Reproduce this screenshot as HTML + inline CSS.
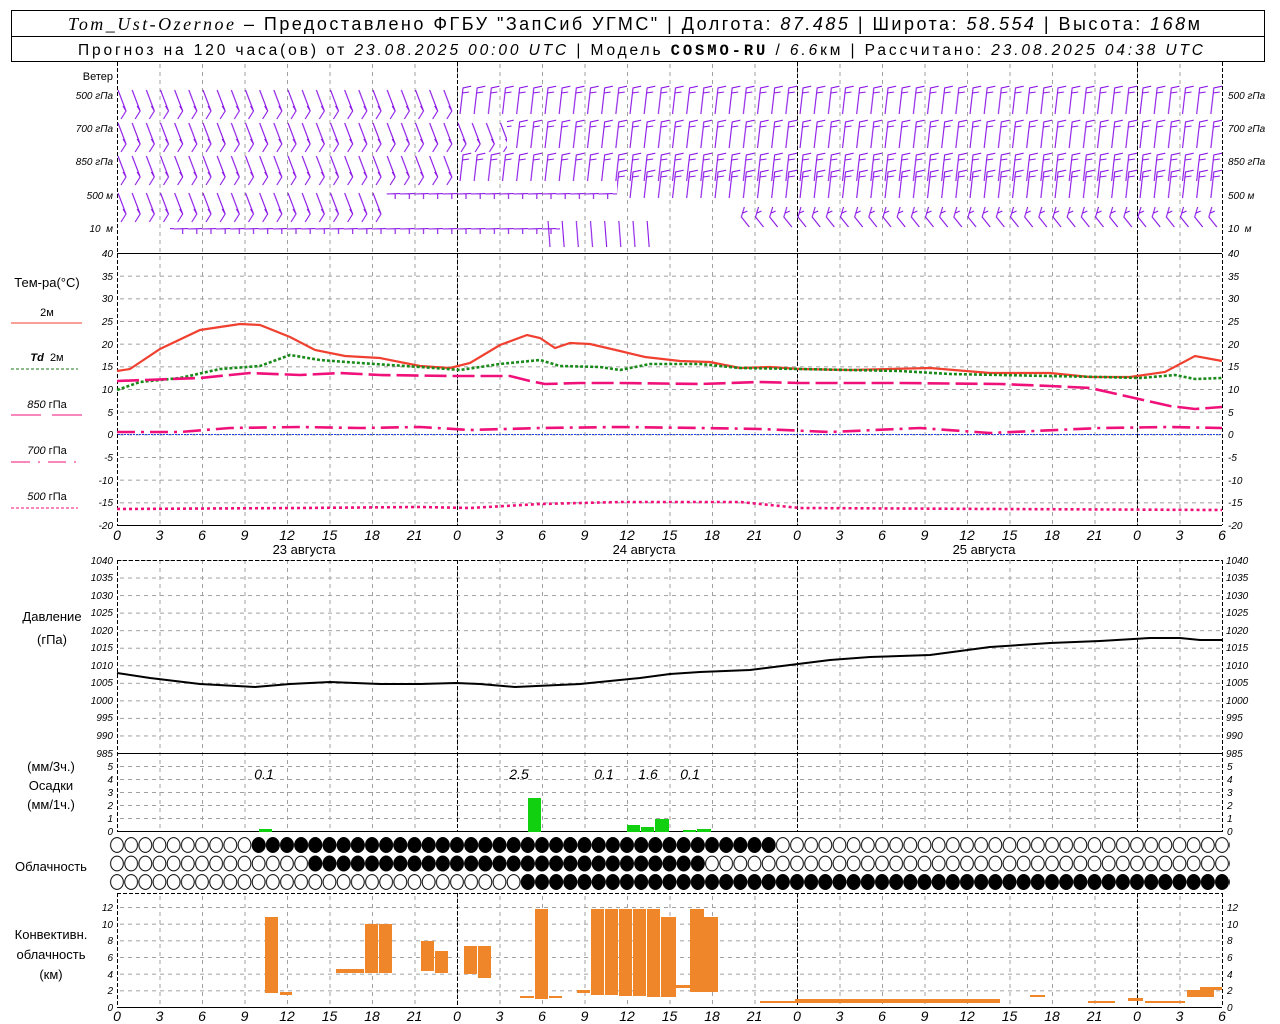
<!DOCTYPE html>
<html><head><meta charset="utf-8"><style>
html,body{margin:0;padding:0;background:#fff;}
svg{display:block;font-family:"Liberation Sans","DejaVu Sans",sans-serif;}
.n{font-style:italic;}
</style></head><body>
<svg width="1280" height="1024" viewBox="0 0 1280 1024" xmlns="http://www.w3.org/2000/svg">
<defs>
<pattern id="vg" x="117" y="0" width="42.5" height="8" patternUnits="userSpaceOnUse"><rect x="0" y="0" width="1" height="4" fill="#a0a0a0"/></pattern>
<pattern id="hT" x="0" y="253" width="8" height="22.667" patternUnits="userSpaceOnUse"><rect x="0" y="0" width="4" height="1" fill="#a0a0a0"/></pattern>
<pattern id="hP" x="0" y="560" width="8" height="17.545" patternUnits="userSpaceOnUse"><rect x="0" y="0" width="4" height="1" fill="#a0a0a0"/></pattern>
<pattern id="hR" x="0" y="766" width="8" height="13" patternUnits="userSpaceOnUse"><rect x="0" y="0" width="4" height="1" fill="#a0a0a0"/></pattern>
<pattern id="hC" x="0" y="907" width="8" height="16.667" patternUnits="userSpaceOnUse"><rect x="0" y="0" width="4" height="1" fill="#a0a0a0"/></pattern>
<pattern id="ce" x="109.9" y="836" width="14.167" height="18.5" patternUnits="userSpaceOnUse"><ellipse cx="7.08" cy="9" rx="6.4" ry="7.4" fill="#fff" stroke="#000" stroke-width="1"/></pattern>
<pattern id="cf" x="109.9" y="836" width="14.167" height="18.5" patternUnits="userSpaceOnUse"><ellipse cx="7.08" cy="9" rx="6.4" ry="7.4" fill="#000" stroke="#000" stroke-width="1"/></pattern>
<pattern id="wA" x="117" y="0" width="14.167" height="60" patternUnits="userSpaceOnUse"><path d="M1 1 L9 22 L4 30 M9 22 L6 17" fill="none" stroke="#8a14e6" stroke-width="1.1"/></pattern>
<pattern id="wB" x="117" y="0" width="14.167" height="60" patternUnits="userSpaceOnUse"><path d="M3 30 L6 4 L15 2 M5.5 9 L12 8" fill="none" stroke="#8a14e6" stroke-width="1.1"/></pattern>
<pattern id="wC" x="117" y="0" width="14.167" height="60" patternUnits="userSpaceOnUse"><path d="M0 8 L15 7.5 M9 8 L9 13" fill="none" stroke="#8a14e6" stroke-width="1.1"/></pattern>
<pattern id="wD" x="117" y="0" width="14.167" height="60" patternUnits="userSpaceOnUse"><path d="M4 2 L1 12 L9 22 M2.5 8 L7 6" fill="none" stroke="#8a14e6" stroke-width="1.1"/></pattern>
<pattern id="wE" x="117" y="0" width="14.167" height="60" patternUnits="userSpaceOnUse"><path d="M6 2 L8 28" fill="none" stroke="#8a14e6" stroke-width="1.1"/></pattern>
</defs>

<!-- header -->
<rect x="11.5" y="10.5" width="1253" height="51" fill="none" stroke="#000"/>
<line x1="11" y1="36.5" x2="1265" y2="36.5" stroke="#000"/>
<text x="68" y="30" font-size="18" textLength="1132" lengthAdjust="spacing"><tspan font-family="Liberation Serif" font-style="italic">Tom_Ust-Ozernoe</tspan> – Предоставлено ФГБУ "ЗапСиб УГМС" | Долгота: <tspan font-style="italic">87.485</tspan> | Широта: <tspan font-style="italic">58.554</tspan> | Высота: <tspan font-style="italic">168</tspan>м</text>
<text x="78" y="55" font-size="15.5" textLength="1125" lengthAdjust="spacing">Прогноз на 120 часа(ов) от <tspan font-style="italic">23.08.2025 00:00 UTC</tspan> | Модель <tspan font-family="Liberation Mono" font-weight="bold">COSMO-RU</tspan> / <tspan font-style="italic">6.6</tspan>км | Рассчитано: <tspan font-style="italic">23.08.2025 04:38 UTC</tspan></text>

<!-- grid -->
<rect x="118" y="62" width="1104" height="191" fill="url(#vg)"/>
<rect x="118" y="253" width="1104" height="272" fill="url(#vg)"/>
<rect x="118" y="560" width="1104" height="193" fill="url(#vg)"/>
<rect x="118" y="753" width="1104" height="79" fill="url(#vg)"/>
<rect x="118" y="893" width="1104" height="114" fill="url(#vg)"/>
<rect x="118" y="253" width="1104" height="272" fill="url(#hT)"/>
<rect x="118" y="560" width="1104" height="193" fill="url(#hP)"/>
<rect x="118" y="766" width="1104" height="66" fill="url(#hR)"/>
<rect x="118" y="907" width="1104" height="100" fill="url(#hC)"/>

<g stroke="#000" stroke-dasharray="4 2" stroke-width="1">
<line x1="117.5" y1="62" x2="117.5" y2="525"/><line x1="457.5" y1="62" x2="457.5" y2="525"/><line x1="797.5" y1="62" x2="797.5" y2="525"/><line x1="1137.5" y1="62" x2="1137.5" y2="525"/><line x1="1222.5" y1="62" x2="1222.5" y2="525"/>
<line x1="117.5" y1="560" x2="117.5" y2="832"/><line x1="457.5" y1="560" x2="457.5" y2="832"/><line x1="797.5" y1="560" x2="797.5" y2="832"/><line x1="1137.5" y1="560" x2="1137.5" y2="832"/><line x1="1222.5" y1="560" x2="1222.5" y2="832"/>
<line x1="117.5" y1="893" x2="117.5" y2="1007"/><line x1="457.5" y1="893" x2="457.5" y2="1007"/><line x1="797.5" y1="893" x2="797.5" y2="1007"/><line x1="1137.5" y1="893" x2="1137.5" y2="1007"/><line x1="1222.5" y1="893" x2="1222.5" y2="1007"/>
<line x1="117" y1="560.5" x2="1222" y2="560.5"/><line x1="117" y1="893.5" x2="1222" y2="893.5"/>
</g>
<g stroke="#000"><line x1="117" y1="253.5" x2="1222" y2="253.5"/><line x1="117" y1="525.5" x2="1222" y2="525.5"/><line x1="117" y1="753.5" x2="1222" y2="753.5"/><line x1="117" y1="831.5" x2="1222" y2="831.5"/><line x1="117" y1="1007.5" x2="1222" y2="1007.5"/></g>

<!-- wind barbs -->
<rect transform="translate(0,89)" x="117" y="0" width="340" height="34" fill="url(#wA)"/>
<rect transform="translate(0,84)" x="457" y="0" width="765" height="34" fill="url(#wB)"/>
<rect transform="translate(0,122)" x="117" y="0" width="390" height="32" fill="url(#wA)"/>
<rect transform="translate(0,118)" x="507" y="0" width="715" height="34" fill="url(#wB)"/>
<rect transform="translate(0,155)" x="117" y="0" width="340" height="32" fill="url(#wA)"/>
<rect transform="translate(0,151)" x="457" y="0" width="765" height="34" fill="url(#wB)"/>
<rect transform="translate(0,192)" x="117" y="0" width="270" height="32" fill="url(#wA)"/>
<rect transform="translate(0,186)" x="387" y="0" width="230" height="20" fill="url(#wC)"/>
<rect transform="translate(0,168)" x="617" y="0" width="605" height="34" fill="url(#wB)"/>
<rect transform="translate(0,221)" x="170" y="0" width="390" height="20" fill="url(#wC)"/>
<rect transform="translate(0,219)" x="540" y="0" width="110" height="30" fill="url(#wE)"/>
<rect transform="translate(0,205)" x="740" y="0" width="482" height="30" fill="url(#wD)"/>

<g class="n" font-size="10" text-anchor="end"><text x="113" y="80" font-style="normal" font-size="11">Ветер</text>
<text x="113" y="99">500 гПа</text><text x="113" y="132">700 гПа</text><text x="113" y="165">850 гПа</text><text x="113" y="199">500 м</text><text x="113" y="232">10 &#160;м</text></g>
<g class="n" font-size="10"><text x="1228" y="99">500 гПа</text><text x="1228" y="132">700 гПа</text><text x="1228" y="165">850 гПа</text><text x="1228" y="199">500 м</text><text x="1228" y="232">10 &#160;м</text></g>

<g class="n" font-size="10" text-anchor="end">
<text x="113" y="257">40</text><text x="113" y="280">35</text><text x="113" y="302">30</text><text x="113" y="325">25</text><text x="113" y="348">20</text><text x="113" y="370">15</text><text x="113" y="393">10</text><text x="113" y="416">5</text><text x="113" y="438">0</text><text x="113" y="461">-5</text><text x="113" y="484">-10</text><text x="113" y="506">-15</text><text x="113" y="529">-20</text></g>
<g class="n" font-size="10">
<text x="1228" y="257">40</text><text x="1228" y="280">35</text><text x="1228" y="302">30</text><text x="1228" y="325">25</text><text x="1228" y="348">20</text><text x="1228" y="370">15</text><text x="1228" y="393">10</text><text x="1228" y="416">5</text><text x="1228" y="438">0</text><text x="1228" y="461">-5</text><text x="1228" y="484">-10</text><text x="1228" y="506">-15</text><text x="1228" y="529">-20</text></g>

<text x="47" y="287" text-anchor="middle" font-size="13">Тем-ра(°C)</text>
<text x="47" y="316" text-anchor="middle" font-size="11">2м</text>
<line x1="11" y1="323" x2="82" y2="323" stroke="#f04030"/>
<text x="47" y="361" text-anchor="middle" font-size="11"><tspan font-style="italic" font-weight="bold">Td</tspan>&#160; 2м</text>
<line x1="11" y1="369" x2="78" y2="369" stroke="#1a7a1a" stroke-dasharray="3 2"/>
<text x="47" y="408" text-anchor="middle" font-size="11"><tspan font-style="italic">850</tspan> гПа</text>
<path d="M11 415 H41 M52 415 H82" stroke="#f0107a"/>
<text x="47" y="454" text-anchor="middle" font-size="11"><tspan font-style="italic">700</tspan> гПа</text>
<path d="M11 462 H30 M38 462 H40 M48 462 H66 M74 462 H76" stroke="#f0107a"/>
<text x="47" y="500" text-anchor="middle" font-size="11"><tspan font-style="italic">500</tspan> гПа</text>
<line x1="11" y1="508" x2="78" y2="508" stroke="#f0107a" stroke-dasharray="3 2"/>

<line x1="118" y1="434.5" x2="1222" y2="434.5" stroke="#2040e0" stroke-dasharray="2 1"/>

<polyline fill="none" stroke="#f04030" stroke-width="2.2" points="117,371 130,369 160,349 200,330 240,324 260,325 290,337 315,350 345,356 380,358 420,366 450,368 470,363 500,345 527,335 540,338 555,348 570,343 590,344 620,351 645,357 680,361 710,362 740,368 770,367 800,369 850,370 930,368 990,373 1050,373 1090,377 1130,377 1165,372 1195,356 1222,361"/>
<polyline fill="none" stroke="#1a8a1a" stroke-width="2.6" stroke-dasharray="3 2" points="117,390 140,382 180,378 220,369 260,366 290,355 320,360 360,363 420,367 460,370 500,364 540,360 560,366 600,367 620,370 650,364 700,364 740,368 800,369 900,371 950,374 1000,375 1100,377 1140,378 1175,375 1195,379 1222,378"/>
<polyline fill="none" stroke="#f0107a" stroke-width="2.6" stroke-dasharray="22 6" points="117,381 200,378 250,373 300,375 340,373 380,375 450,376 510,376 530,381 545,384 580,383 620,383 700,384 760,382 800,383 900,383 1000,384 1050,386 1090,388 1130,397 1170,406 1195,409 1222,407"/>
<polyline fill="none" stroke="#f0107a" stroke-width="2.6" stroke-dasharray="18 6 3 6" points="117,432 180,432 230,428 300,427 360,428 420,427 470,430 540,428 620,427 700,428 760,429 830,432 920,428 990,433 1100,428 1170,427 1222,428"/>
<polyline fill="none" stroke="#f0107a" stroke-width="2.6" stroke-dasharray="3 3" points="117,509 300,508 420,507 470,508 540,504 620,502 740,502 800,508 1000,509 1222,510"/>

<g class="n" font-size="14" text-anchor="middle">
<text x="117" y="540">0</text><text x="159.5" y="540">3</text><text x="202" y="540">6</text><text x="244.5" y="540">9</text><text x="287" y="540">12</text><text x="329.5" y="540">15</text><text x="372" y="540">18</text><text x="414.5" y="540">21</text><text x="457" y="540">0</text><text x="499.5" y="540">3</text><text x="542" y="540">6</text><text x="584.5" y="540">9</text><text x="627" y="540">12</text><text x="669.5" y="540">15</text><text x="712" y="540">18</text><text x="754.5" y="540">21</text><text x="797" y="540">0</text><text x="839.5" y="540">3</text><text x="882" y="540">6</text><text x="924.5" y="540">9</text><text x="967" y="540">12</text><text x="1009.5" y="540">15</text><text x="1052" y="540">18</text><text x="1094.5" y="540">21</text><text x="1137" y="540">0</text><text x="1179.5" y="540">3</text><text x="1222" y="540">6</text></g>
<g font-size="13" text-anchor="middle"><text x="304" y="554">23 августа</text><text x="644" y="554">24 августа</text><text x="984" y="554">25 августа</text></g>

<text x="52" y="621" text-anchor="middle" font-size="13">Давление</text>
<text x="52" y="644" text-anchor="middle" font-size="13">(гПа)</text>
<g class="n" font-size="10" text-anchor="end">
<text x="113" y="564">1040</text><text x="113" y="581">1035</text><text x="113" y="599">1030</text><text x="113" y="616">1025</text><text x="113" y="634">1020</text><text x="113" y="651">1015</text><text x="113" y="669">1010</text><text x="113" y="686">1005</text><text x="113" y="704">1000</text><text x="113" y="721">995</text><text x="113" y="739">990</text><text x="113" y="757">985</text></g>
<g class="n" font-size="10">
<text x="1226" y="564">1040</text><text x="1226" y="581">1035</text><text x="1226" y="599">1030</text><text x="1226" y="616">1025</text><text x="1226" y="634">1020</text><text x="1226" y="651">1015</text><text x="1226" y="669">1010</text><text x="1226" y="686">1005</text><text x="1226" y="704">1000</text><text x="1226" y="721">995</text><text x="1226" y="739">990</text><text x="1226" y="757">985</text></g>
<polyline fill="none" stroke="#000" stroke-width="2" points="117,673 150,678 200,684 255,687 290,684 330,682 380,684 420,684 456,683 480,684 515,687 580,684 640,678 670,674 700,672 750,670 790,665 830,660 870,657 930,655 990,647 1050,643 1100,641 1150,638 1180,638 1200,640 1222,640"/>

<text x="51" y="771" text-anchor="middle" font-size="13">(мм/3ч.)</text>
<text x="51" y="790" text-anchor="middle" font-size="13">Осадки</text>
<text x="51" y="809" text-anchor="middle" font-size="13">(мм/1ч.)</text>
<g class="n" font-size="10" text-anchor="end"><text x="113" y="770">5</text><text x="113" y="783">4</text><text x="113" y="796">3</text><text x="113" y="809">2</text><text x="113" y="822">1</text><text x="113" y="835">0</text></g>
<g class="n" font-size="10"><text x="1227" y="770">5</text><text x="1227" y="783">4</text><text x="1227" y="796">3</text><text x="1227" y="809">2</text><text x="1227" y="822">1</text><text x="1227" y="835">0</text></g>
<g fill="#10d010"><rect x="259" y="829" width="13" height="3"/><rect x="528" y="798" width="13" height="34"/><rect x="627" y="825" width="13" height="7"/><rect x="641" y="827" width="13" height="5"/><rect x="655" y="819" width="14" height="13"/><rect x="683" y="830" width="13" height="2"/><rect x="697" y="829" width="14" height="3"/></g>
<g class="n" font-size="14" text-anchor="middle"><text x="264" y="779">0.1</text><text x="519" y="779">2.5</text><text x="604" y="779">0.1</text><text x="648" y="779">1.6</text><text x="690" y="779">0.1</text></g>

<text x="51" y="871" text-anchor="middle" font-size="13">Облачность</text>
<rect x="109.9" y="836" width="1120" height="18.5" fill="url(#ce)"/>
<rect x="251.6" y="836" width="524" height="18.5" fill="url(#cf)"/>
<rect x="109.9" y="854.5" width="1120" height="18.5" fill="url(#ce)"/>
<rect x="308.3" y="854.5" width="397" height="18.5" fill="url(#cf)"/>
<rect x="109.9" y="873" width="1120" height="18.5" fill="url(#ce)"/>
<rect x="520.7" y="873" width="709" height="18.5" fill="url(#cf)"/>

<text x="51" y="939" text-anchor="middle" font-size="13">Конвективн.</text>
<text x="51" y="959" text-anchor="middle" font-size="13">облачность</text>
<text x="51" y="979" text-anchor="middle" font-size="13">(км)</text>
<g class="n" font-size="10" text-anchor="end"><text x="113" y="911">12</text><text x="113" y="928">10</text><text x="113" y="944">8</text><text x="113" y="961">6</text><text x="113" y="978">4</text><text x="113" y="994">2</text><text x="113" y="1011">0</text></g>
<g class="n" font-size="10"><text x="1227" y="911">12</text><text x="1227" y="928">10</text><text x="1227" y="944">8</text><text x="1227" y="961">6</text><text x="1227" y="978">4</text><text x="1227" y="994">2</text><text x="1227" y="1011">0</text></g>
<g fill="#f0862a">
<rect x="265" y="917" width="13" height="76"/><rect x="280" y="992" width="12" height="3"/>
<rect x="336" y="969" width="28" height="4"/><rect x="365" y="924" width="13" height="49"/><rect x="379" y="924" width="13" height="49"/>
<rect x="421" y="941" width="13" height="30"/><rect x="435" y="951" width="13" height="22"/>
<rect x="464" y="946" width="13" height="28"/><rect x="478" y="946" width="13" height="32"/>
<rect x="520" y="996" width="14" height="2"/><rect x="535" y="909" width="13" height="90"/><rect x="549" y="996" width="13" height="2"/>
<rect x="577" y="990" width="13" height="3"/>
<rect x="591" y="909" width="13" height="86"/><rect x="605" y="909" width="13" height="86"/><rect x="619" y="909" width="13" height="87"/><rect x="633" y="909" width="13" height="87"/><rect x="647" y="909" width="13" height="88"/><rect x="661" y="917" width="15" height="80"/>
<rect x="676" y="985" width="14" height="3"/><rect x="690" y="909" width="14" height="83"/><rect x="704" y="917" width="14" height="75"/>
<rect x="760" y="1001" width="35" height="2"/><rect x="795" y="999" width="205" height="4"/>
<rect x="1030" y="995" width="15" height="2"/><rect x="1088" y="1001" width="27" height="2"/><rect x="1128" y="998" width="15" height="3"/><rect x="1145" y="1001" width="40" height="2"/>
<rect x="1187" y="990" width="13" height="7"/><rect x="1200" y="987" width="14" height="10"/><rect x="1214" y="987" width="8" height="3"/>
</g>
<g class="n" font-size="14" text-anchor="middle">
<text x="117" y="1021">0</text><text x="159.5" y="1021">3</text><text x="202" y="1021">6</text><text x="244.5" y="1021">9</text><text x="287" y="1021">12</text><text x="329.5" y="1021">15</text><text x="372" y="1021">18</text><text x="414.5" y="1021">21</text><text x="457" y="1021">0</text><text x="499.5" y="1021">3</text><text x="542" y="1021">6</text><text x="584.5" y="1021">9</text><text x="627" y="1021">12</text><text x="669.5" y="1021">15</text><text x="712" y="1021">18</text><text x="754.5" y="1021">21</text><text x="797" y="1021">0</text><text x="839.5" y="1021">3</text><text x="882" y="1021">6</text><text x="924.5" y="1021">9</text><text x="967" y="1021">12</text><text x="1009.5" y="1021">15</text><text x="1052" y="1021">18</text><text x="1094.5" y="1021">21</text><text x="1137" y="1021">0</text><text x="1179.5" y="1021">3</text><text x="1222" y="1021">6</text></g>
</svg>
</body></html>
